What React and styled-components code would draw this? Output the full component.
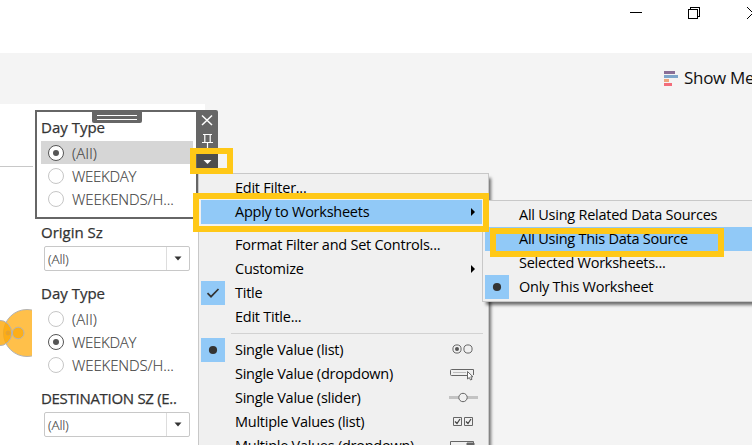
import React from "react";
import styled, { createGlobalStyle, css } from "styled-components";

const Global = createGlobalStyle`
  * { box-sizing: border-box; }
  body { margin: 0; overflow: hidden; background: #fff; }
  svg { display: block; flex: none; }
`;

const Window = styled.div`
  position: relative;
  width: 752px;
  height: 445px;
  overflow: hidden;
  display: flex;
  flex-direction: column;
  background: #f4f4f4;
  font-family: "Open Sans", "Noto Sans", sans-serif;
`;

const TitleBar = styled.header`
  flex: none;
  height: 53px;
  background: #fff;
  padding: 7px 0 0 630px;
`;

const Toolbar = styled.div`
  flex: none;
  height: 51px;
  display: flex;
  align-items: center;
  padding: 0 0 1px 664px;
  gap: 6px;
`;

const ToolbarLabel = styled.span`
  font: 400 17px/24px "Open Sans", sans-serif;
  letter-spacing: ${(p) => p.$spacing}px;
  white-space: nowrap;
  color: #111;
`;

const Canvas = styled.main`
  flex: 1;
  width: 205px;
  display: flex;
  background: #fff;
  overflow: hidden;
`;

const ChartPane = styled.div`
  flex: none;
  width: 35px;
  padding-top: 62px;
`;

const Filters = styled.div`
  width: 163px;
  padding-top: 6px;
`;

const filterBox = css`
  padding: ${(p) => p.$top}px 0 0 9px;
  height: ${(p) => p.$height}px;
`;

const FilterCard = styled.section`
  ${filterBox}
`;

const SelectedCard = styled.section`
  ${filterBox}
  padding: 5px 0 0 4px;
  border: 2px solid #666;
`;

const FilterTitle = styled.h2`
  margin: 0;
  margin-left: ${(p) => p.$shift || 0}px;
  font: 400 15px/20px "Open Sans", sans-serif;
  -webkit-text-stroke: 0.25px #333;
  letter-spacing: ${(p) => p.$spacing}px;
  white-space: nowrap;
  color: #333;
`;

const OptionRow = styled.div`
  display: flex;
  align-items: center;
  gap: 8px;
  height: 23px;
  width: 152px;
  padding-left: 7px;
  background: ${(p) => (p.$active ? "#d6d6d6" : "transparent")};
`;

const Options = styled.div`
  margin-top: ${(p) => p.$gap}px;
  margin-left: ${(p) => p.$shift || 0}px;
`;

const OptionText = styled.span`
  font: 300 15px/22px "Open Sans", sans-serif;
  letter-spacing: ${(p) => p.$spacing}px;
  -webkit-text-stroke: 0.15px #444;
  white-space: nowrap;
  color: #444;
`;

const RadioRing = styled.span`
  display: grid;
  place-items: center;
  width: 16px;
  height: 16px;
  border-radius: 50%;
  background: #fff;
  border: 1px solid ${(p) => (p.$on ? "#555" : "#c6c6c6")};

  &::after {
    content: "";
    width: 6px;
    height: 6px;
    border-radius: 50%;
    background: ${(p) => (p.$on ? "#555" : "transparent")};
  }
`;

const SelectBox = styled.div`
  display: flex;
  align-items: center;
  width: 146px;
  height: 25px;
  margin-top: ${(p) => p.$gap}px;
  padding-left: 3px;
  border: 1px solid #c8c8c8;
  border-radius: 2px;
`;

const SelectValue = styled.span`
  flex: 1;
  font: 300 13.5px/20px "Open Sans", sans-serif;
  letter-spacing: -0.2px;
  -webkit-text-stroke: 0.15px #444;
  color: #444;
`;

const SelectArrow = styled.span`
  display: grid;
  place-items: center;
  width: 23px;
  height: 23px;
  border-left: 1px solid #ddd;
`;

const DragHandle = styled.div`
  position: absolute;
  left: 92px;
  top: 111px;
  width: 50px;
  height: 12px;
  background: #666;
  border-radius: 0 0 2px 2px;
  display: flex;
  flex-direction: column;
  gap: 3px;
  padding: 4px 5px;

  &::before,
  &::after {
    content: "";
    flex: none;
    height: 1px;
    background: #fff;
  }
`;

const CardTools = styled.div`
  position: absolute;
  left: 197px;
  top: 110px;
  width: 21px;
  height: 61px;
  background: #666;
  border-radius: 0 2px 0 0;
`;

const Menu = styled.div`
  position: absolute;
  left: ${(p) => p.$left}px;
  top: ${(p) => p.$top}px;
  width: ${(p) => p.$width}px;
  height: ${(p) => p.$height}px;
  padding: 2px 5px 2px 2px;
  background: #f0f0f0;
  border: 1px solid #c8c8c8;
  box-shadow: 3px 4px 3px -1px rgba(0, 0, 0, 0.55);
`;

const MenuRow = styled.div`
  display: flex;
  align-items: center;
  height: 24px;
  margin-right: ${(p) => p.$bleed || 0}px;
  background: ${(p) => (p.$hot ? "#91c9f7" : "transparent")};
`;

const Mark = styled.span`
  display: grid;
  place-items: center;
  width: 24px;
  height: 24px;
  margin-right: 10px;
  background: ${(p) => (p.$on ? "#91c9f7" : "transparent")};
`;

const MenuText = styled.span`
  flex: 1;
  font: 400 14.5px/22px "Open Sans", sans-serif;
  letter-spacing: ${(p) => p.$spacing}px;
  white-space: nowrap;
  color: #000;
`;

const Separator = styled.div`
  height: 9px;
  padding: 4px 0 0 30px;

  &::after {
    content: "";
    display: block;
    height: 1px;
    background: #d2d2d2;
  }
`;

const Highlight = styled.div`
  position: absolute;
  left: ${(p) => p.$left}px;
  top: ${(p) => p.$top}px;
  width: ${(p) => p.$width}px;
  height: ${(p) => p.$height}px;
  border: 6px solid #ffc817;
  box-shadow: ${(p) => (p.$edge ? "inset 0 0 0 1px #f7f3e8" : "none")};
`;

const WindowButtons = () => (
  <svg width="122" height="14" fill="none" stroke="#000" shapeRendering="crispEdges">
    <path d="M0 5.5H12M58.5 2.5H67.5V11.5H58.5ZM60.5 2.5V.5H69.5V9.5H67.5" />
    <path d="M117 0 129 12M129 0 117 12" shapeRendering="auto" />
  </svg>
);

const ShowMeIcon = () => (
  <svg width="14" height="16">
    <path fill="#8a6e96" d="M0 1H11V4H0Z" />
    <path fill="#7ea6cb" d="M0 5H14V8H0Z" />
    <path fill="#eda57c" d="M0 9H5V12H0Z" />
    <path fill="#f36c7a" d="M0 13H8V16H0Z" />
  </svg>
);

const ChartMarks = () => (
  <svg width="33" height="195">
    <path stroke="#c8c8c8" d="M0 .5H33" />
    <svg width="32" height="195" stroke="#b3b3b3">
      <circle cx="27" cy="167" r="23.5" fill="#ffc04a" />
      <circle cx="-1" cy="167" r="12.8" fill="#fda80a" fillOpacity=".82" />
      <circle cx="18.2" cy="167" r="5.8" fill="#fdae18" />
      <circle cx="8" cy="167" r="2" fill="#f0a31b" stroke="#e0a33a" />
    </svg>
  </svg>
);

const ToolIcons = () => (
  <svg width="21" height="61" fill="none" stroke="#fff">
    <path strokeWidth="1.5" d="M5 5.5 15 15M15 5.5 5 15" />
    <path strokeWidth="1.2" d="M6 24.5H15M7.8 24.5V32M13.2 24.5V32M5 32.5H16M10.5 32.5V38" />
    <path fill="#4d4d4d" stroke="none" d="M0 43H21V61H0Z" />
    <path fill="#fff" stroke="none" d="M6.5 50H14.5L10.5 54Z" />
  </svg>
);

const CheckMark = () => (
  <svg width="14" height="12" fill="none" stroke="#333" strokeWidth="1.7">
    <path d="M1.5 6.2 5 9.7 12.5 2" />
  </svg>
);

const Dot = () => (
  <svg width="10" height="10">
    <circle cx="5" cy="5" r="4.1" fill="#333" />
  </svg>
);

const SubmenuArrow = () => (
  <svg width="14" height="8">
    <path d="M2 0 6 4 2 8Z" />
  </svg>
);

const modeIcons = {
  radios: (
    <g fill="none" stroke="#666">
      <circle cx="10" cy="7" r="4.1" />
      <circle cx="21" cy="7" r="4.1" />
      <circle cx="10" cy="7" r="2" fill="#555" stroke="none" />
    </g>
  ),
  dropdown: (
    <g fill="none" stroke="#666">
      <path d="M20 9.5H4.5Q3.5 9.5 3.5 8.5V4.5Q3.5 3.5 4.5 3.5H26.5V9" />
      <path stroke="#bbb" d="M6 6.5H19" />
      <path fill="#fff" d="M20.5 5.5V13L22.3 11.5 23.5 14 25 13.3 23.8 10.8H26Z" />
    </g>
  ),
  slider: (
    <g>
      <path stroke="#c3c3c3" strokeWidth="3" d="M2 7.5H31" />
      <circle cx="16" cy="7.5" r="4.2" fill="#f0f0f0" stroke="#666" />
    </g>
  ),
  checks: (
    <g fill="none" stroke="#666">
      <path d="M6.5 3.5H14.5V11.5H6.5ZM17.5 3.5H25.5V11.5H17.5Z" />
      <path stroke="#444" strokeWidth="1.2" d="M8 7.5 10 9.5 13 5M19 7.5 21 9.5 24 5" />
    </g>
  ),
  multi: (
    <g fill="none" stroke="#666">
      <path d="M20 9.5H3.5V3.5H26.5V9" />
      <path fill="#666" d="M20 5H27V11H20Z" />
    </g>
  ),
};

const ModeIcon = ({ kind }) => (
  <svg width="36" height="16">{modeIcons[kind]}</svg>
);

const OptionList = ({ selected, activeFirst, gap, shift }) => (
  <Options $gap={gap} $shift={shift}>
    {[["(All)", 0.25], ["WEEKDAY", -0.3], ["WEEKENDS/H...", -0.12]].map(([label, spacing], i) => (
      <OptionRow key={label} $active={activeFirst && i === 0}>
        <RadioRing $on={selected === i} />
        <OptionText $spacing={spacing}>{label}</OptionText>
      </OptionRow>
    ))}
  </Options>
);

const Select = ({ gap }) => (
  <SelectBox $gap={gap}>
    <SelectValue>(All)</SelectValue>
    <SelectArrow>
      <svg width="8" height="5"><path fill="#333" d="M.5 .5H7.5L4 4.5Z" /></svg>
    </SelectArrow>
  </SelectBox>
);

const Item = ({ label, spacing = -0.25, mark, hot, bleed, children }) => (
  <MenuRow $hot={hot} $bleed={bleed}>
    <Mark $on={!!mark}>{mark}</Mark>
    <MenuText $spacing={spacing}>{label}</MenuText>
    {children}
  </MenuRow>
);

export default function App() {
  return (
    <Window>
      <Global />
      <TitleBar><WindowButtons /></TitleBar>
      <Toolbar>
        <ShowMeIcon />
        <ToolbarLabel $spacing={-0.3}>Show Me</ToolbarLabel>
      </Toolbar>
      <Canvas>
        <ChartPane><ChartMarks /></ChartPane>
        <Filters>
          <SelectedCard $height={109}>
            <FilterTitle $spacing={0}>Day Type</FilterTitle>
            <OptionList selected={0} activeFirst gap={4} />
          </SelectedCard>
          <FilterCard $top={3} $height={62}>
            <FilterTitle $shift={-3} $spacing={0}>Origin Sz</FilterTitle>
            <Select gap={4} />
          </FilterCard>
          <FilterCard $top={2} $height={105}>
            <FilterTitle $shift={-3} $spacing={0}>Day Type</FilterTitle>
            <OptionList selected={1} gap={4} shift={-3} />
          </FilterCard>
          <FilterCard $top={2} $height={60}>
            <FilterTitle $shift={-3} $spacing={-0.3}>DESTINATION SZ (E..</FilterTitle>
            <Select gap={4} />
          </FilterCard>
        </Filters>
      </Canvas>
      <DragHandle />
      <CardTools><ToolIcons /></CardTools>
      <Menu $left={198} $top={173} $width={291} $height={290}>
        <Item label="Edit Filter..." />
        <Item label="Apply to Worksheets" hot><SubmenuArrow /></Item>
        <Separator />
        <Item label="Format Filter and Set Controls..." />
        <Item label="Customize"><SubmenuArrow /></Item>
        <Item label="Title" mark={<CheckMark />} />
        <Item label="Edit Title..." />
        <Separator />
        <Item label="Single Value (list)" mark={<Dot />}><ModeIcon kind="radios" /></Item>
        <Item label="Single Value (dropdown)"><ModeIcon kind="dropdown" /></Item>
        <Item label="Single Value (slider)"><ModeIcon kind="slider" /></Item>
        <Item label="Multiple Values (list)"><ModeIcon kind="checks" /></Item>
        <Item label="Multiple Values (dropdown)"><ModeIcon kind="multi" /></Item>
      </Menu>
      <Menu $left={482} $top={200} $width={290} $height={102}>
        <Item label="All Using Related Data Sources" />
        <Item label="All Using This Data Source" hot />
        <Item label="Selected Worksheets..." />
        <Item label="Only This Worksheet" mark={<Dot />} />
      </Menu>
      <Highlight $left={190} $top={148} $width={43} $height={26} />
      <Highlight $left={193} $top={193} $width={296} $height={39} $edge />
      <Highlight $left={490} $top={228} $width={234} $height={29} />
    </Window>
  );
}
